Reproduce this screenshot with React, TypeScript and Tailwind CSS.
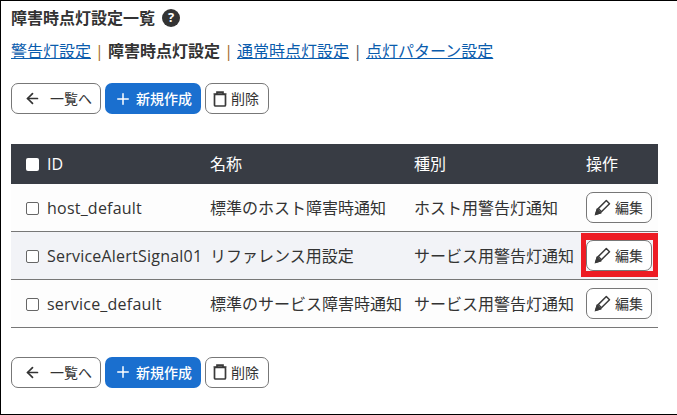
import { ArrowLeft, Plus } from "lucide-react";

const rows = [
  { id: "host_default", name: "標準のホスト障害時通知", kind: "ホスト用警告灯通知", height: "h-[47px]" },
  { id: "ServiceAlertSignal01", name: "リファレンス用設定", kind: "サービス用警告灯通知", height: "h-[48px]", marked: true },
  { id: "service_default", name: "標準のサービス障害時通知", kind: "サービス用警告灯通知", height: "h-[48px]" },
];

function Pencil() {
  return (
    <svg viewBox="0 0 16 16" className="h-[17px] w-[17px]" fill="none" stroke="#3a3a3a" strokeWidth="1.4">
      <path d="M11.6 1.4 14.6 4.4 6 13 1.6 14.4 3 10Z" strokeLinejoin="round" />
      <path d="M3 10 6 13 1.6 14.4Z" fill="#3a3a3a" />
      <path d="M4 9 7 12" />
    </svg>
  );
}

function Trash() {
  return (
    <svg viewBox="0 0 14 16" className="h-[16px] w-[14px]" fill="none" stroke="#3a3a3a" strokeWidth="1.7">
      <rect x="1.5" y="3.5" width="11" height="11.5" rx="1" />
      <path d="M0.5 3H13.5M4 3V1.2H10V3" />
    </svg>
  );
}

function Toolbar() {
  return (
    <div className="flex gap-[4px]">
      <button className="flex h-[31px] w-[90px] items-center rounded-[7px] border border-[#777] bg-white pl-[12px] text-[14px] text-[#333]">
        <ArrowLeft size={17} strokeWidth={2.4} className="mr-[9px]" />
        一覧へ
      </button>
      <button className="flex h-[31px] w-[96px] items-center rounded-[7px] bg-[#1a6fcf] pl-[9px] text-[14px] font-medium text-white">
        <Plus size={18} strokeWidth={2} className="mr-[4px]" />
        新規作成
      </button>
      <button className="flex h-[31px] w-[64px] items-center gap-[4px] rounded-[7px] border border-[#777] bg-white pl-[7px] text-[14px] text-[#333]">
        <Trash />
        削除
      </button>
    </div>
  );
}

function Check({ dark }: { dark?: boolean }) {
  return (
    <span
      className={
        dark
          ? "h-[13px] w-[13px] shrink-0 rounded-[2px] bg-white"
          : "h-[13px] w-[13px] shrink-0 rounded-[2px] border border-[#666] bg-white"
      }
    />
  );
}

function Sep({ className }: { className: string }) {
  return <span className={"w-[17px] text-center text-[16px] " + className}>|</span>;
}

export default function App() {
  return (
    <div
      className="h-[415px] w-[677px] overflow-hidden border-t border-b border-l border-black bg-white pl-[10px] text-[#333]"
      style={{ fontFamily: '"Open Sans", "Noto Sans CJK JP", sans-serif' }}
    >
      <div className="flex h-[34px] items-center">
        <h1 className="text-[16px] leading-none font-bold">障害時点灯設定一覧</h1>
        <span className="ml-[7px] flex h-[18px] w-[18px] items-center justify-center rounded-full bg-[#333] text-[13px] font-bold text-white">
          ?
        </span>
      </div>
      <div className="mt-[6px] flex h-[20px] items-center text-[16px] leading-none">
        <a className="text-[#0a5cad] underline">警告灯設定</a>
        <Sep className="text-[#a56a2a]" />
        <b className="font-bold">障害時点灯設定</b>
        <Sep className="text-[#a56a2a]" />
        <a className="text-[#0a5cad] underline">通常時点灯設定</a>
        <Sep className="text-[#555]" />
        <a className="text-[#0a5cad] underline">点灯パターン設定</a>
      </div>

      <div className="mt-[22px]">
        <Toolbar />
      </div>

      <table className="mt-[30px] w-[647px] table-fixed border-collapse text-[16px]">
        <colgroup>
          <col className="w-[199px]" />
          <col className="w-[204px]" />
          <col className="w-[172px]" />
          <col className="w-[72px]" />
        </colgroup>
        <thead>
          <tr className="h-[40px] bg-[#383c44] text-left text-white">
            <th className="pl-[15px] font-normal">
              <span className="flex items-center gap-[8px]">
                <Check dark />
                ID
              </span>
            </th>
            <th className="font-normal">名称</th>
            <th className="font-normal">種別</th>
            <th className="font-normal">操作</th>
          </tr>
        </thead>
        <tbody>
          {rows.map((row) => (
            <tr key={row.id} className={row.height + (row.marked ? " border-b border-[#777] bg-[#f2f3f7]" : " border-b border-[#777] bg-[#fdfdfd]")}>
              <td className="pt-[2px] pl-[15px]">
                <span className="flex items-center gap-[8px] whitespace-nowrap tracking-[0.22px]">
                  <Check />
                  {row.id}
                </span>
              </td>
              <td className="pt-[2px] whitespace-nowrap">{row.name}</td>
              <td className="pt-[2px] whitespace-nowrap">{row.kind}</td>
              <td className="relative pt-[1px]">
                <button className="flex h-[31px] w-[66px] items-center gap-[4px] rounded-[7px] border border-[#777] bg-white pl-[7px] text-[14px] text-[#333]">
                  <Pencil />
                  編集
                </button>
                {row.marked && (
                  <span className="absolute top-[1px] right-0 bottom-[2px] left-[-5px] border-x-[5px] border-t-[7px] border-b-[6px] border-[#ed1c24]" />
                )}
              </td>
            </tr>
          ))}
        </tbody>
      </table>

      <div className="mt-[29px]">
        <Toolbar />
      </div>
    </div>
  );
}
